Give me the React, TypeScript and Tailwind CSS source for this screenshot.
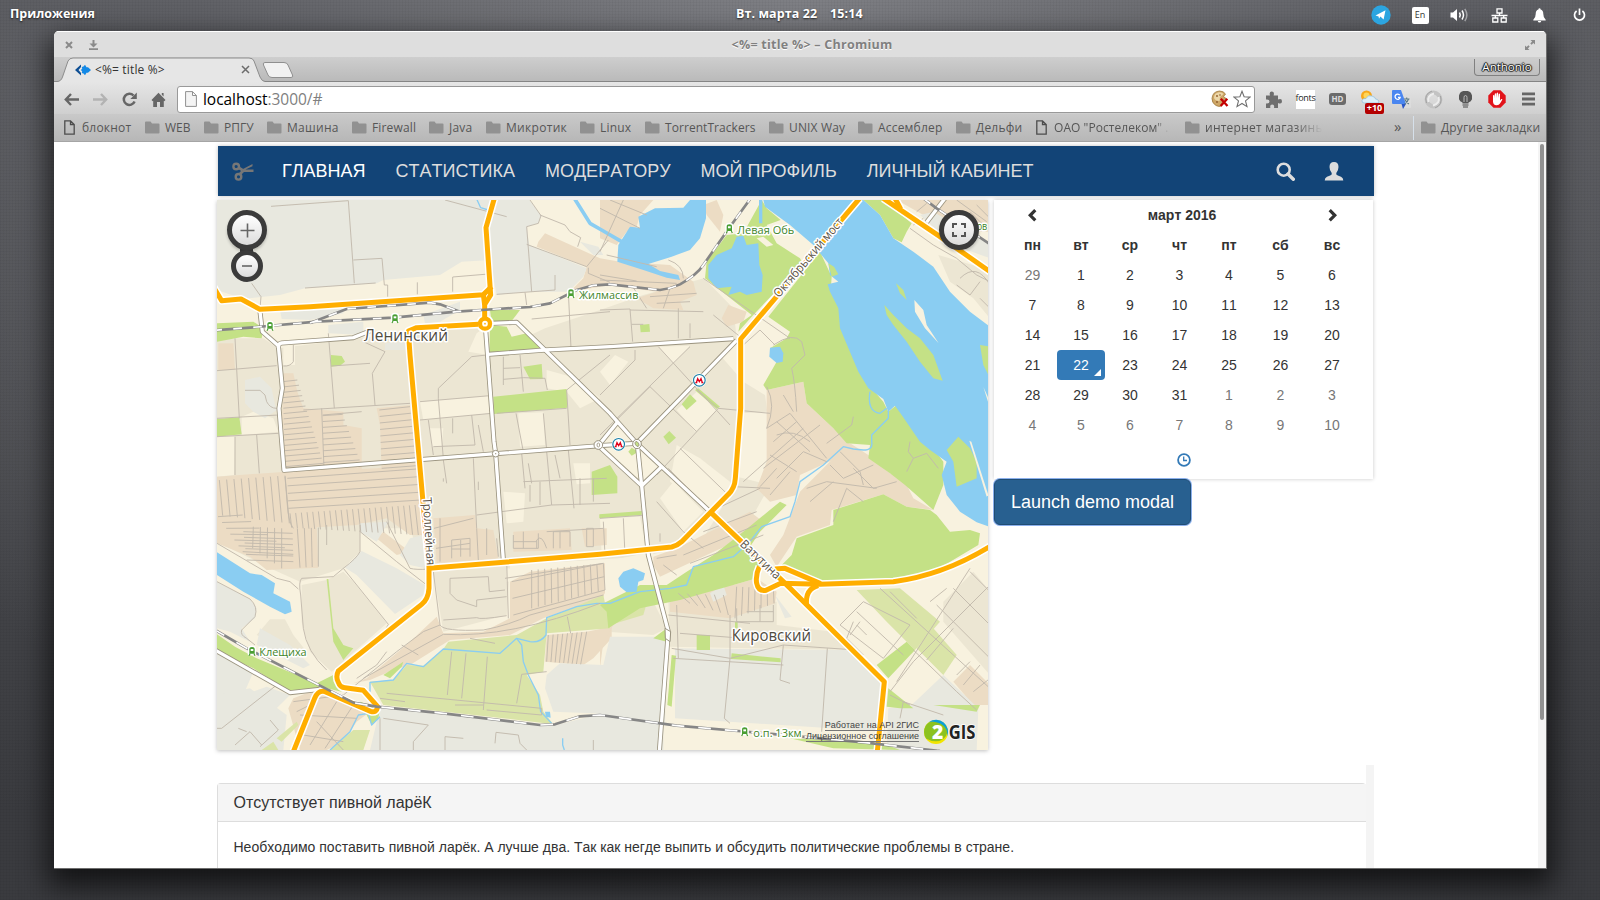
import React from "react";

type Pt = [number, number];

/* Parallel streets interpolated between edge a→b and edge c→d. */
function hatch(a: Pt, b: Pt, c: Pt, d: Pt, n: number): string {
  let s = "";
  for (let i = 0; i < n; i++) {
    const t = n === 1 ? 0 : i / (n - 1);
    const x1 = a[0] + (b[0] - a[0]) * t;
    const y1 = a[1] + (b[1] - a[1]) * t;
    const x2 = c[0] + (d[0] - c[0]) * t;
    const y2 = c[1] + (d[1] - c[1]) * t;
    s += `M${x1.toFixed(1)} ${y1.toFixed(1)}L${x2.toFixed(1)} ${y2.toFixed(1)}`;
  }
  return s;
}

const C = {
  cream: "#f8f2df",
  beige: "#ece6d3",
  brown: "#ecdcc4",
  grey: "#e8e8df",
  green: "#c4e186",
  lime: "#dae4a8",
  water: "#8acdf2",
  street: "#c2b9ac",
};

function Areas({ fill, list }: { fill: string; list: string[] }) {
  return (
    <g fill={fill}>
      {list.map((p, i) => (
        <polygon key={i} points={p} strokeLinejoin="round" />
      ))}
    </g>
  );
}

const orange = [
  "M10 275L35 317L93 312L150 343L300 335L820 299L845 275",
  "M853 10L828 98L842 300L824 328V366",
  "M820 299L824 330",
  "M805 388L620 398L595 408L600 480L638 910L657 1115V1180Q655 1212 635 1228L385 1428Q376 1445 385 1462Q390 1478 405 1478L460 1486L503 1535Q500 1555 482 1549L345 1490Q325 1484 314 1510L250 1670",
  "M657 1120L1170 1078L1385 1056Q1402 1052 1415 1040L1555 898Q1574 880 1576 850L1592 640V432L1949 10",
  "M1500 950L1720 1160L2023 1460L2002 1670",
  "M1648 1115Q1636 1140 1640 1165Q1645 1190 1668 1186L1712 1165L1830 1168L2050 1160Q2200 1140 2340 1054",
  "M1695 1122L1725 1120L1832 1166",
  "M1790 1232Q1784 1182 1825 1172",
  "M2020 10L2190 125L2340 230",
  "M2055 10L2072 42",
];

const white = [
  "M150 350L157 410L205 452L217 580L207 640L222 826L857 776L1170 752",
  "M205 458Q205 445 215 444L430 428L480 408",
  "M827 405L852 740L857 776L880 1095",
  "M845 385L920 382L1005 465L1200 655L1280 745L1500 950",
  "M835 478L1005 465L1200 455L1570 431",
  "M1580 436L1280 745L1165 752L1222 682",
  "M1165 752L1295 872L1355 815",
  "M1282 748L1295 872L1315 1080L1375 1310L1348 1670",
  "M10 1362L240 1493L330 1483",
  "M2205 10L2150 82",
];

const rails = [
  "M10 406L130 397L320 380L550 368L740 350L860 342L960 336L1020 325L1100 285L1150 271L1200 268L1350 285Q1380 282 1410 268Q1460 240 1480 210L1560 95L1622 10",
  "M300 384L410 342L660 323L690 328L750 350",
  "M10 1302L110 1360L430 1523L500 1535L700 1555L990 1590L1035 1588L1110 1564L1170 1560L1400 1592L1700 1618L1960 1642L2190 1668",
  "M2140 10L2180 40L2340 148",
];

const streets = [
  "M183 34L415 17L433 265M430 195L516 190L523 270L533 270V305M285 279L497 264M622 262V298M728 290V246L835 237M125 265L153 305L150 340",
  "M705 15L890 65M960 15L993 62L985 85L950 95L965 290M990 60L1065 90L1080 110L1112 128L1103 155M950 148L1130 215L1195 135M1135 218V235L1200 262M860 298L1035 285V240M945 292L950 330M965 372L1200 350M1075 290L1083 460",
  "M75 430L88 670M21 527L200 512M21 670L205 660M21 725L205 715M75 725V840M140 720L148 835M105 586H150L165 600L170 620Q180 640 200 640M250 450V500Q240 515 220 513",
  "M355 415L373 640M364 513L480 505M460 440L525 470L487 535L495 630M280 645L600 625M685 610V580L785 485L830 480M685 610L700 790M630 620L840 602M630 675L845 655M655 675L670 780M670 755L795 750L785 660M728 670V715M805 690L820 770M880 485V570M930 480L940 590M880 520L930 518M880 553L940 548L1005 550L1012 585M1200 480L1070 585L1080 750M860 655L1070 640M918 655L940 770M1000 655L1010 765",
  "M700 795L710 865M790 790L800 1000M935 775L945 880M1010 770L1025 930M1075 765L1092 940M955 805L965 865M1035 780L1050 850",
  hatch([218, 560], [225, 815], [262, 555], [340, 805], 17),
  hatch([338, 662], [340, 820], [398, 658], [455, 812], 10),
  hatch([508, 645], [515, 820], [600, 635], [622, 812], 10),
  hatch([232, 850], [235, 940], [620, 822], [632, 915], 5),
  hatch([28, 855], [225, 842], [38, 962], [238, 985], 10),
  hatch([240, 955], [615, 930], [245, 998], [625, 1020], 23),
  hatch([24, 965], [98, 1070], [98, 960], [250, 1078], 7),
  hatch([100, 1010], [110, 1095], [248, 1015], [250, 1100], 6),
  hatch([130, 995], [215, 1000], [128, 1060], [215, 1120], 5),
  hatch([262, 1000], [325, 998], [270, 1118], [325, 1115], 4),
  hatch([965, 1125], [1180, 1105], [965, 1240], [1185, 1185], 12),
  hatch([905, 1160], [910, 1260], [1180, 1105], [1185, 1185], 3),
  hatch([1015, 1320], [1130, 1310], [1010, 1400], [1112, 1408], 9),
  "M672 1000L790 970M678 1060L780 1045M690 1100V970M725 1090V1035L780 1030V1085M725 1062H780M752 1035V1085M800 1000L805 1095M830 1000V1080M860 1030L865 1085",
  hatch([1580, 1175], [1690, 1180], [1575, 1270], [1692, 1225], 7),
  hatch([1405, 1195], [1540, 1200], [1440, 1225], [1555, 1260], 6),
  "M335 640L342 820M338 660L455 650M225 845L232 930Q235 980 250 1000M450 990V1070Q440 1090 400 1120L370 1145L275 1150Q265 1160 272 1200L280 1300Q290 1370 350 1425M21 1045L200 1150L240 1160L265 1182M400 1120L535 1288L500 1350M448 1008L560 1100L650 1170M530 980L570 1060L600 1120Q620 1125 655 1122M350 990V1050",
  "M21 1160L120 1212Q145 1235 135 1265L95 1305Q90 1320 110 1330L135 1350M21 1600H35L200 1470M75 1650L120 1610L155 1650M110 1610L85 1600M180 1575L205 1605L150 1655M510 1570V1665M520 1570L655 1590L610 1640V1665M705 1665V1625L760 1630M855 1645L858 1612L925 1620L930 1645L950 1665M1150 1635V1665",
  "M530 1495L995 1540V1560L830 1545M725 1370L712 1500M768 1375L755 1510M832 1385L820 1545M935 1438L920 1525M935 1438L1010 1430M735 1530H820M510 1510L585 1520M720 1150L835 1145L838 1190L885 1185M720 1150V1195L740 1215L800 1235V1215L890 1205M700 1275L800 1268Q810 1275 890 1262M670 1130L690 1290Q700 1310 820 1305Q900 1290 960 1260L1180 1200M460 1450L700 1318Q900 1330 1170 1225M400 1500L560 1370L640 1310L690 1290M440 1450L500 1410L530 1370M575 1350L625 1380M1010 1010L1180 1000M800 960L1025 930L1200 925M890 1095L895 1270M885 1150L1180 1105M780 1330L855 1345M1072 1265L1082 1315",
  "M910 1020V1060H985V1015M940 1010V1060M910 1040H980M980 1060V1035Q995 1015 1010 1060M1030 1060V1010H1080V1055M1050 1010V1060M1130 1000H1150V1055H1130V1000M700 850V860M805 860V885M940 860L1190 850M960 870V920M990 860V930M1110 850V930M1150 850V920",
  "M250 1520L400 1500M270 1560L440 1570M280 1620L400 1640M330 1490L270 1640M380 1520L300 1650M430 1530L345 1660M300 1530L260 1550M320 1580L400 1665",
  "M1170 40L1290 100M1240 15L1170 170M1200 15L1310 60M1170 345L1260 342L1268 440M1265 270L1310 340M1265 388H1300M1405 340V430M1440 385V430M1260 345L1480 350M1320 305L1460 295M1340 325L1440 320M1380 280L1360 340",
  "M1345 455L1560 690M1440 455L1170 720M1275 465V495L1170 600M1220 675L1320 575M1320 575L1460 710M1525 640L1340 840M1410 760L1560 905M1525 640L1680 655M1460 585L1525 640M1375 820L1530 980M1480 250L1740 430M1510 360L1590 425M1600 450L1650 405L1695 450M1690 450Q1750 410 1775 440L1785 480L1745 520Q1755 560 1760 650M1375 195Q1420 210 1420 250",
  "M1670 575Q1700 630 1670 700L1740 655L1850 790M1700 680L1800 770M1690 740L1760 680M1660 820L1830 690M1680 780L1760 830M1700 850L1780 770L1850 800M1720 600L1750 650M1930 665L1925 690L1850 745M1700 720Q1750 700 1800 740M1680 900L1740 830M1860 810L1900 850L1990 810M1890 770L1950 830L1960 870M1790 880L1850 860L2000 880M1800 920L1870 860M1870 980L1910 880L1960 920M1930 820L1990 880L2060 860M2100 740L2095 770L2110 790L2090 830M2110 790L2150 775L2185 820",
  "M1500 950L1650 880M1570 875L1680 880M1480 1010L1640 950M1420 1080L1640 990M1440 1105L1660 1020M1350 1040V1015M1340 1090L1400 1080M1360 1110L1400 1140M1700 820L1650 875M1600 860L1780 700M1340 920L1420 1010L1480 1060M1170 970L1310 960M1180 980L1185 1080M1240 970L1245 1080",
  "M1375 1260L1620 1285M1400 1230L1405 1390M1385 1360L1560 1390L1720 1350L1940 1365M1560 1260V1390L1543 1570L1560 1585M1720 1350L1710 1455L1740 1465M1852 1360L1835 1610M1390 1390L1720 1410M1410 1315L1600 1330M1580 1240V1280H1690V1230M1650 1230V1280M1610 1250H1690",
  "M1960 1220L1890 1290L2020 1390L2100 1290L1960 1220M1930 1280L1910 1330L1960 1380M1940 1290L1970 1320M1950 1280L1920 1320M2010 1180L2340 1480M2080 1380L1940 1250M2280 1120L2060 1460M2340 1170L2110 1400L2040 1490M2110 1365L2240 1490L2300 1545M2280 1130L2340 1190M2230 1180L2340 1290M2180 1230L2340 1390M2230 1300L2150 1395M2040 1190L2120 1270M2160 1220L2210 1180M2240 1440L2280 1400M2260 1470L2310 1410M2290 1490L2340 1450M2070 1570L2080 1520L2200 1560M2040 1500L2100 1530",
  "M2100 100L2170 150L2240 190L2300 240L2340 260M2110 90L2140 70M2250 250Q2300 200 2340 270M2240 270L2280 300L2310 260M2280 50L2340 110M2300 30L2340 70M2240 15L2330 80M2310 310L2340 340M2120 50L2150 25M1190 180L1340 215M1170 240L1280 258M1170 255L1400 265",
];

function Station({ x, y }: { x: number; y: number }) {
  return (
    <g transform={`translate(${x} ${y})`}>
      <path d="M-9 9V-5Q-9 -13 0 -13T9 -5V9Z" fill="#fff" stroke="#fff" strokeWidth={7} />
      <path d="M-8 8V-5Q-8 -12 0 -12T8 -5V8Z" fill="#4a9e33" />
      <path d="M-4 -6H4V0H-4Z" fill="#fff" />
      <path d="M-6 8L-9 14M6 8L9 14" stroke="#4a9e33" strokeWidth={3.5} />
    </g>
  );
}

function Metro({ x, y }: { x: number; y: number }) {
  return (
    <g transform={`translate(${x} ${y})`}>
      <circle r={21} fill="#fff" />
      <circle r={17.5} fill="#fff" stroke="#1b7fa6" strokeWidth={3.5} />
      <path d="M-12 7H-6M12 7H6M-9 7L-5 -5L0 4L5 -5L9 7" fill="none" stroke="#e2001a" strokeWidth={4} />
    </g>
  );
}

function Label(p: { x: number; y: number; w: number; size: number; color: string; rot?: number; children: string }) {
  return (
    <text
      transform={`translate(${p.x} ${p.y}) rotate(${p.rot ?? 0})`}
      fontFamily="'Open Sans','Noto Sans',sans-serif"
      fontSize={p.size}
      fill={p.color}
      stroke="#ffffff"
      strokeWidth={9}
      strokeLinejoin="round"
      paintOrder="stroke"
      textLength={p.w}
      lengthAdjust="spacingAndGlyphs"
    >
      {p.children}
    </text>
  );
}

function CityMap() {
  return (
    <svg className="block h-[550px] w-[771px]" viewBox="21 15 2313 1650" preserveAspectRatio="none">
      <rect x="0" y="0" width="2400" height="1700" fill={C.cream} />
      <Areas
        fill={C.beige}
        list={[
          "21 430 160 430 205 460 450 430 620 405 820 400 800 415 775 470 835 480 1005 400 1170 345 1300 300 1482 250 1570 340 1580 430 1530 480 1600 560 1665 600 1672 650 1595 655 1560 900 1500 960 1400 1060 1300 1085 900 1110 890 1260 700 1310 670 1130 640 1120 600 1000 450 1000 450 1070 400 1120 270 1160 180 1120 21 1040",
          "275 1170 350 1155 400 1130 430 1160 530 1285 365 1430 300 1370 275 1280",
          "1375 1215 1700 1220 1700 1290 1870 1310 1930 1365 1380 1355",
          "2200 1220 2290 1130 2340 1190 2340 1440 2200 1280",
          "180 1273 225 1273 250 1320 290 1370 200 1350 140 1320",
          "1210 1260 1330 1220 1370 1300 1330 1320 1190 1310",
          "2185 180 2340 225 2340 370 2290 310 2220 260",
          "1500 870 1560 840 1680 870 1630 960 1560 1010 1480 1030 1540 930",
        ]}
      />
      <Areas
        fill={C.cream}
        list={[
          "630 620 835 602 840 655 640 675",
          "925 655 1000 652 1005 750 930 755",
          "21 725 75 725 72 840 21 845",
          "95 665 130 650 190 670 205 710 95 720",
          "220 445 255 445 255 510 220 510",
          "1010 525 1100 550 1170 610 1110 640 1070 590 1010 580",
          "1400 750 1470 790 1560 860 1560 880 1500 940 1380 860",
          "1400 645 1460 590 1525 640 1455 710",
          "1170 530 1215 480 1255 500 1200 570",
          "1345 455 1440 452 1390 505",
          "1222 682 1290 760 1355 815 1295 872 1165 760",
          "1350 910 1390 860 1480 950 1420 1010",
          "470 845 515 845 515 882 470 882",
          "880 890 945 895 940 980 890 985",
          "890 1120 960 1125 960 1155 890 1160",
          "1170 970 1290 965 1310 1070 1175 1080",
          "700 700 660 700 665 755 695 755",
          "1090 805 1140 805 1140 865 1100 868",
          "1180 1100 1330 1070 1330 1170 1190 1190",
        ]}
      />
      <Areas
        fill={C.brown}
        list={[
          "1005 115 1170 190 1230 200 1380 210 1450 260 1460 300 1410 320 1420 345 1330 340 1280 310 1340 290 1200 270 1080 290 1120 250 1130 215 980 155 985 140",
          "220 535 250 535 262 590 280 640 400 650 400 690 455 700 455 830 228 830 215 700",
          "500 640 600 630 625 830 515 830 510 690",
          "21 845 230 830 500 820 620 805 640 1020 600 1020 530 970 440 990 320 997 325 1118 170 1125 120 1085 21 1045",
          "25 445 70 445 75 525 25 525",
          "500 1030 520 1010 600 1070 560 1080",
          "670 970 795 960 800 1000 850 1005 865 1090 680 1105",
          "910 1010 1080 1000 1085 1065 910 1070",
          "1115 1000 1190 1000 1190 1050 1125 1055",
          "900 1160 960 1130 1185 1105 1185 1195 1000 1245 900 1280",
          "470 1450 600 1340 680 1265 700 1315 820 1310 960 1240 1185 1190 1180 1205 1000 1270 900 1320 720 1335 600 1410 550 1425 480 1455 430 1465",
          "1010 1320 1130 1310 1205 1295 1205 1330 1150 1390 1120 1410 1005 1400",
          "250 1510 330 1480 480 1550 440 1580 400 1640 350 1665 270 1665 235 1540",
          "1170 15 1330 15 1290 60 1280 95 1250 110 1220 150 1170 130",
          "1480 30 1520 15 1540 60 1530 110 1490 60",
          "1535 370 1555 330 1610 350 1600 380 1550 395",
          "1670 585 1780 560 1790 625 1870 700 1920 748 1880 790 1770 840 1760 900 1680 920 1640 880 1670 800",
          "1920 745 1975 780 2040 835 2080 850 2110 910 2170 945 2090 935 2020 898 1865 945 1860 990 1760 1025 1700 1115 1680 1080 1720 1020 1770 890 1870 790",
          "1330 1085 1400 1060 1620 950 1660 980 1640 1010 1350 1145 1330 1110",
          "1380 1215 1420 1170 1570 1170 1640 1150 1700 1190 1695 1225 1560 1270 1380 1250",
          "2060 15 2340 15 2340 110 2230 110",
          "2230 1460 2280 1410 2340 1470 2340 1530 2290 1530",
          "1170 1300 1210 1290 1180 1340 1170 1420",
        ]}
      />
      <Areas
        fill={C.grey}
        list={[
          "21 15 958 15 993 62 985 85 950 95 958 150 1130 220 1120 245 1075 290 945 290 860 300 840 195 755 200 690 240 520 255 500 265 285 280 210 300 100 312 21 285",
          "105 555 150 545 185 580 195 630 200 645 165 670 130 650 105 625",
          "355 390 460 380 460 420 355 415",
          "640 360 750 320 750 345 690 380 645 385",
          "210 345 400 330 400 355 300 375 215 372",
          "525 445 600 440 600 465 525 465",
          "455 1068 560 1120 645 1170 640 1200 555 1257 440 1140 405 1118",
          "450 985 535 980 500 1040 450 1010",
          "600 1030 640 1020 645 1120 600 1110 570 1080",
          "21 1160 120 1212 140 1240 135 1270 95 1300 120 1340 60 1310 21 1300",
          "150 1300 240 1350 300 1410 280 1420 140 1350",
          "21 1370 130 1430 100 1500 170 1475 240 1500 200 1540 150 1600 21 1665",
          "21 1500 120 1480 230 1560 220 1665 21 1665",
          "510 1540 1030 1592 1150 1562 1360 1580 1360 1665 480 1665",
          "1010 1440 1050 1405 1180 1410 1200 1325 1370 1325 1365 1590 1150 1555 1030 1550 1005 1480",
          "1395 1360 1930 1365 2020 1450 2025 1610 1395 1570",
          "2105 1530 2200 1440 2305 1540 2300 1665 2030 1665 2035 1540",
          "1500 1195 1540 1170 1550 1200 1510 1220",
          "1695 1200 1745 1265 1725 1270",
          "2130 60 2170 50 2340 150 2340 190 2230 150",
          "1110 140 1165 155 1180 180 1150 180",
        ]}
      />
      <Areas
        fill={C.lime}
        list={[
          "480 1460 550 1455 590 1410 640 1412 700 1362 715 1340 920 1320 1010 1270 1180 1200 1200 1300 1010 1315 1000 1430 950 1440 990 1500 1000 1550 1030 1588 840 1565 520 1530",
          "430 1605 480 1605 460 1665 360 1665",
          "1940 1185 2070 1180 2190 1280 2115 1365 2030 1280",
          "2120 1360 2170 1300 2240 1380 2200 1440",
          "200 1630 260 1580 265 1590 215 1640",
          "155 1665 190 1640 205 1665",
          "1170 1240 1320 1190 1300 1260 1200 1290",
        ]}
      />
      <Areas
        fill={C.green}
        list={[
          "21 385 130 380 160 400 155 430 100 425 21 440",
          "363 480 395 483 405 500 390 512 363 515",
          "850 605 1070 582 1072 638 852 657",
          "940 515 995 507 998 552 960 553",
          "840 345 930 345 900 385 845 385",
          "840 390 890 395 905 425 950 415 995 460 838 472",
          "21 672 88 667 95 718 21 725",
          "1145 830 1200 810 1222 845 1222 895 1145 900",
          "1168 958 1295 948 1295 960 1168 970",
          "350 1152 355 1152 370 1300 400 1350 415 1355 430 1360 400 1395 370 1340",
          "21 1318 75 1355 140 1390 320 1465 370 1440 395 1490 330 1475 245 1493 130 1420 21 1372",
          "450 1520 510 1540 505 1570 485 1590 470 1560",
          "1290 390 1318 387 1320 410 1292 412",
          "1415 628 1440 598 1460 618 1430 645",
          "1360 725 1378 708 1398 728 1376 748",
          "1455 585 1465 580 1530 635 1520 642",
          "1255 770 1265 758 1285 770 1265 782",
          "1655 15 1670 40 1712 75 1670 90 1700 145 1770 190 1778 205 1625 365 1585 410 1590 385 1625 360 1485 250 1490 200 1550 120 1600 115",
          "1830 170 1865 245 1862 290 1895 340 1900 400 1930 450 1955 530 1985 580 2020 620 2035 650 2060 630 2080 660 2170 760 2200 800 2200 870 2170 945 2085 870 2040 835 1975 790 1980 750 1910 745 1870 700 1790 625 1780 560 1670 585 1660 570 1700 500 1680 460 1730 430 1740 410 1675 365",
          "1960 15 2020 15 2105 85 2090 110 2075 142 2050 130 2010 60",
          "1870 990 1760 1030 1745 1080 1710 1115 1730 1120 1830 1158 2050 1158 2170 1130 2305 1050 2310 1015 2280 1005 2220 1010 2180 960 2160 945 2090 935 2020 898 1870 945",
          "1170 1230 1290 1170 1370 1170 1430 1130 1510 1080 1600 1010 1710 920 1730 930 1650 1010 1610 1070 1650 1100 1640 1150 1570 1170 1410 1215 1290 1240 1195 1300 1190 1250",
          "1460 1320 1500 1320 1500 1365 1460 1365",
          "1565 1375 1712 1390 1712 1402 1563 1392",
          "1385 1380 1398 1382 1385 1535 1372 1530",
          "2000 1410 2090 1340 2115 1365 2035 1450",
          "2035 1480 2110 1540 2070 1540 2030 1535",
          "1740 1630 2010 1642 2070 1665 1870 1660",
          "1575 1280 1583 1280 1583 1300 1575 1300",
          "1330 1330 1370 1300 1370 1340",
          "520 1440 580 1400 575 1415 540 1450",
          "2170 1530 2310 1530 2300 1550",
        ]}
      />
      <Areas
        fill={C.water}
        list={[
          "1335 40 1420 38 1440 15 1488 15 1488 70 1470 130 1440 165 1385 185 1315 207 1350 228 1405 240 1410 255 1370 248 1300 225 1222 200 1225 150 1260 95 1290 98 1285 65",
          "1680 458 1710 455 1720 475 1718 500 1700 504 1678 485",
          "1495 210 1520 180 1565 160 1580 125 1600 122 1610 150 1645 145 1648 210 1658 240 1655 290 1610 300 1590 290 1555 300 1565 275 1520 280 1495 250",
          "1660 15 1960 15 2010 60 2050 130 2110 170 2170 215 2220 290 2280 350 2340 395 2340 996 2300 982 2250 950 2210 900 2195 840 2210 800 2160 765 2130 740 2075 660 2055 632 2035 650 2020 612 1975 580 1945 530 1890 400 1885 340 1860 290 1853 268 1885 260 1860 240 1855 205 1810 150 1740 90 1665 35",
          "21 1072 120 1135 155 1140 195 1165 190 1195 240 1220 245 1250 225 1258 180 1235 100 1190 21 1140",
          "1225 1150 1240 1130 1270 1120 1305 1135 1300 1155 1285 1160 1280 1190 1250 1192 1230 1175",
          "1005 1550 1020 1550 1022 1568 1008 1565",
        ]}
      />
      <g fill="none" stroke={C.water} strokeLinejoin="round">
        <path strokeWidth={11} d="M1093 10L1140 85L1180 108L1235 140" />
        <path strokeWidth={10} d="M1652 15V85" />
        <path strokeWidth={4} d="M1980 590Q1970 650 2010 655L2030 640M2035 640V670L1985 720V740Q1990 765 1960 765L1930 762L1900 755L1840 810L1770 860L1755 920L1740 965L1655 995L1620 1040L1570 1085L1450 1115L1430 1170L1380 1180L1290 1190L1200 1225L1160 1225L1100 1235L1010 1268L1008 1320Q990 1345 960 1340L920 1330L870 1375L700 1362L640 1415L590 1405L550 1455L480 1462L480 1490" />
        <path strokeWidth={4} d="M920 1330L935 1350L940 1400L955 1440L985 1500L992 1550L1025 1585M360 1665L420 1610L445 1560L475 1555L485 1590L510 1565M1058 1630V1650L1063 1665" />
        <path strokeWidth={4} d="M800 12L812 38L835 45" />
      </g>
      <Areas
        fill={C.green}
        list={[
          "2023 330 2050 360 2090 400 2130 430 2170 480 2198 557 2170 550 2130 500 2090 440 2050 390 2030 360",
          "2058 265 2080 285 2090 315 2070 295",
          "2310 450 2340 455 2340 550 2320 510",
          "2210 765 2245 725 2280 760 2300 800 2300 850 2240 875 2230 800",
          "1855 205 1872 215 1885 238 1865 245",
        ]}
      />
      <Areas
        fill={C.cream}
        list={["2113 315 2140 345 2150 390 2186 445 2145 400 2115 350", "2278 737 2284 740 2335 900 2330 905", "2320 575 2340 620 2340 640", "1640 130 1660 125 1690 150 1670 155"]}
      />
      <g fill="none" stroke={C.street} strokeWidth={2.8} strokeLinejoin="round">
        {streets.map((d, i) => (
          <path key={i} d={d} />
        ))}
      </g>
      <g fill="none" strokeLinejoin="round">
        {white.map((d, i) => (
          <path key={i} d={d} stroke="#9a937f" strokeWidth={15} />
        ))}
        {white.map((d, i) => (
          <path key={i} d={d} stroke="#ffffff" strokeWidth={10} />
        ))}
        <path d="M1365 1300L1382 1310L1380 1340L1366 1330Z" fill="#fff" stroke="#9a937f" strokeWidth={3} />
        <circle cx={857} cy={776} r={10} fill="#fff" stroke="#9a937f" strokeWidth={3} />
        <circle cx={857} cy={776} r={2} fill="#9a937f" />
        <circle cx={1165} cy={750} r={13} fill="#fff" stroke="#9a937f" strokeWidth={3} />
        <ellipse cx={1281} cy={747} rx={13} ry={14} fill="#fff" stroke="#9a937f" strokeWidth={3} />
        <ellipse cx={1281} cy={747} rx={5} ry={8} fill={C.green} stroke="#9a937f" strokeWidth={2.5} transform="rotate(-30 1281 747)" />
        <ellipse cx={1165} cy={750} rx={4} ry={6} stroke="#9a937f" strokeWidth={2.5} />
      </g>
      <g fill="none" strokeLinejoin="round">
        {orange.map((d, i) => (
          <path key={i} d={d} stroke="#ffffff" strokeWidth={24} />
        ))}
        <circle cx={825} cy={386} r={15} stroke="#fff" strokeWidth={24} />
        {orange.map((d, i) => (
          <path key={i} d={d} stroke="#ffae00" strokeWidth={15} />
        ))}
        <circle cx={825} cy={386} r={15} stroke="#ffae00" strokeWidth={13} fill="#fff" />
        <circle cx={825} cy={386} r={2.5} fill="#ffae00" />
      </g>
      <g fill="none" strokeLinejoin="round">
        {rails.map((d, i) => (
          <path key={i} d={d} stroke="#868686" strokeWidth={8} />
        ))}
        {rails.map((d, i) => (
          <path key={i} d={d} stroke="#ffffff" strokeWidth={5} strokeDasharray={i === 2 ? "38 42" : "26 34"} />
        ))}
      </g>
      <Station x={180} y={393} />
      <Station x={555} y={370} />
      <Station x={1083} y={295} />
      <Station x={1558} y={100} />
      <Station x={126} y={1368} />
      <Station x={1604} y={1609} />
      <Metro x={1468} y={556} />
      <Metro x={1226} y={748} />
      <Label x={462} y={438} w={252} size={47} color="#4f4b3f">Ленинский</Label>
      <Label x={1565} y={1338} w={238} size={47} color="#4f4b3f">Кировский</Label>
      <Label x={1107} y={311} w={178} size={34} color="#3f8529">Жилмассив</Label>
      <Label x={1582} y={117} w={171} size={34} color="#3f8529">Левая Обь</Label>
      <Label x={148} y={1382} w={142} size={34} color="#3f8529">Клещиха</Label>
      <Label x={1630} y={1625} w={145} size={34} color="#3f8529">о.п. 13км</Label>
      <Label x={2300} y={105} w={32} size={34} color="#3f8529">ов</Label>
      <Label x={1707} y={310} w={300} size={37} color="#5d5548" rot={-49.5}>Октябрьский мост</Label>
      <Label x={638} y={908} w={204} size={37} color="#5d5548" rot={86.5}>Троллейная</Label>
      <Label x={1588} y={1050} w={152} size={37} color="#5d5548" rot={43.5}>Ватутина</Label>
    </svg>
  );
}

function GisMark() {
  return (
    <svg className="h-[28px] w-[54px] overflow-visible" viewBox="0 0 162 84">
      <circle cx="39" cy="42" r="36" fill="#f2e500" />
      <path d="M3 42A36 36 0 0 1 18 13Q50 4 68 24Q80 46 62 62Q40 78 10 62Q3 54 3 42Z" fill="#8cc21f" />
      <path d="M18 12A36 36 0 0 1 72 56Q76 34 60 22Q42 8 18 12Z" fill="#0a9fd8" />
      <text x="27" y="63" fontFamily="'Open Sans',sans-serif" fontWeight="800" fontSize="60" fill="#fff" textLength="34" lengthAdjust="spacingAndGlyphs">2</text>
      <text x="77" y="64" fontFamily="'Open Sans',sans-serif" fontWeight="700" fontSize="58" fill="#222" stroke="#fff" strokeWidth="5" paintOrder="stroke" textLength="80" lengthAdjust="spacingAndGlyphs">GIS</text>
    </svg>
  );
}

const Folder = () => (
  <svg className="h-[13px] w-[15px] shrink-0" viewBox="0 0 15 13">
    <path d="M0 1.5Q0 .5 1 .5H5.5L7 2.5H13.5Q14.5 2.5 14.5 3.5V11.5Q14.5 12.5 13.5 12.5H1Q0 12.5 0 11.5Z" fill="#919191" />
  </svg>
);
const Doc = () => (
  <svg className="h-[15px] w-[13px] shrink-0" viewBox="0 0 13 15">
    <path d="M.8 .8H6.5L10.2 4.5V14.2H.8ZM6.5 .8V4.5H10.2" fill="none" stroke="#4c4c4c" strokeWidth="1.3" />
  </svg>
);

function Bookmark({ w, doc, text, cls }: { w: string; doc?: boolean; text: string; cls?: string }) {
  return (
    <div className={`flex shrink-0 items-center gap-[5px] overflow-hidden whitespace-nowrap ${w}`}>
      {doc ? <Doc /> : <Folder />}
      <span className={cls ?? ""}>{text}</span>
    </div>
  );
}

const Slot = ({ w, children }: { w: string; children?: React.ReactNode }) => (
  <div className={`flex shrink-0 items-center justify-center ${w}`}>{children}</div>
);

const weeks: string[][] = [
  ["29", "1", "2", "3", "4", "5", "6"],
  ["7", "8", "9", "10", "11", "12", "13"],
  ["14", "15", "16", "17", "18", "19", "20"],
  ["21", "22", "23", "24", "25", "26", "27"],
  ["28", "29", "30", "31", "1", "2", "3"],
  ["4", "5", "6", "7", "8", "9", "10"],
];

function Calendar() {
  return (
    <div className="h-[279px] w-[379px] bg-white px-[14px] text-[14px] leading-[30px] text-[#333] shadow-[0_0_4px_rgba(0,0,0,0.22)]">
      <div className="grid grid-cols-[49px_48px_50px_49px_50px_53px_50px] text-center font-bold">
        <div className="flex items-center justify-center">
          <svg className="h-[13px] w-[9px]" viewBox="0 0 9 13"><path d="M7.3 1.2L2.2 6.3L7.3 11.4" fill="none" stroke="#333" strokeWidth="3.2" /></svg>
        </div>
        <div className="col-span-5">март 2016</div>
        <div className="flex items-center justify-center">
          <svg className="h-[13px] w-[9px]" viewBox="0 0 9 13"><path d="M1.7 1.2L6.8 6.3L1.7 11.4" fill="none" stroke="#333" strokeWidth="3.2" /></svg>
        </div>
        {["пн", "вт", "ср", "чт", "пт", "сб", "вс"].map((d) => (
          <div key={d}>{d}</div>
        ))}
      </div>
      <div className="grid grid-cols-[49px_48px_50px_49px_50px_53px_50px] text-center">
        {weeks.flatMap((row, r) =>
          row.map((d, c) => {
            const muted = (r === 0 && c === 0) || (r === 4 && c > 3) || r === 5;
            const today = r === 3 && c === 1;
            return (
              <div key={`${r}-${c}`} className={today ? "relative rounded-[4px] bg-[#337ab7] text-white" : muted ? "text-[#777]" : ""}>
                {d}
                {today && <i className="absolute right-[4px] bottom-[4px] border-b-[7px] border-l-[7px] border-b-white border-l-transparent" />}
              </div>
            );
          }),
        )}
      </div>
      <div className="flex justify-center pt-[13px] pl-px">
        <svg className="h-[14px] w-[14px]" viewBox="0 0 14 14" fill="none" stroke="#337ab7">
          <circle cx="7" cy="7" r="5.900" strokeWidth="1.800" />
          <path d="M6.700 3.400V7.500H10" strokeWidth="1.300" />
        </svg>
      </div>
    </div>
  );
}

function TopPanel() {
  return (
    <div className="flex h-[31px] items-center pb-[3px] text-[12.5px] font-bold text-white [text-shadow:0_1px_2px_rgba(0,0,0,0.7)]">
      <div className="w-[726px] pl-[10px]">Приложения</div>
      <div className="flex w-[635px] gap-[13px] pl-[10px] tracking-[0.08px]">
        <span>Вт. марта 22</span>
        <span>15:14</span>
      </div>
      <div className="flex items-center pt-[2px]">
        <Slot w="w-[40px]">
          <svg className="h-5 w-5" viewBox="0 0 20 20"><circle cx="10" cy="10" r="9.7" fill="#2ca5e0" /><path d="M4.5 10.6L14.5 5.3L12.6 14.6L9.4 11.6L8 13.8L7.6 11.4Z" fill="#fff" /></svg>
        </Slot>
        <Slot w="w-[38px]">
          <span className="flex h-[17px] w-[17px] items-center justify-center rounded-[2px] bg-white text-[9px] font-normal text-[#333] [text-shadow:none]">En</span>
        </Slot>
        <Slot w="w-[40px]">
          <svg className="h-4 w-[19px]" viewBox="0 0 19 16" fill="none" stroke="#fff" strokeWidth="1.5"><path d="M.5 5.5H3L7 2V14L3 10.500H.5Z" fill="#fff" stroke="none" /><path d="M9.500 5.500Q11 8 9.500 10.500M12 3.500Q15 8 12 12.500" /><path d="M14.800 1.800Q19 8 14.800 14.200" opacity=".45" /></svg>
        </Slot>
        <Slot w="w-[40px]">
          <svg className="h-[15px] w-[17px]" viewBox="0 0 17 15" fill="none" stroke="#fff" strokeWidth="1.3"><path d="M6 .9H11V5H6ZM1.800 10H6.800V14H1.800ZM10.200 10H15.200V14H10.200ZM8.500 5V7.500M.5 7.500H16.500M4.300 7.500V10M12.700 7.500V10" /></svg>
        </Slot>
        <Slot w="w-[40px]">
          <svg className="h-[15px] w-[13px]" viewBox="0 0 13 15" fill="#fff"><path d="M6.500 .3Q7.600 .3 7.600 1.600Q10.300 2.400 10.300 6Q10.300 10 12.700 11.800V12.400H.3V11.800Q2.700 10 2.700 6Q2.700 2.400 5.400 1.600Q5.400 .3 6.500 .3ZM4.800 13H8.200Q8 14.600 6.500 14.600T4.800 13Z" /></svg>
        </Slot>
        <Slot w="w-[40px]">
          <svg className="h-[14px] w-[13px]" viewBox="0 0 13 14" fill="none" stroke="#fff" strokeWidth="1.7"><path d="M6.500 .5V7M3.600 3A5 5 0 1 0 9.400 3" /></svg>
        </Slot>
      </div>
    </div>
  );
}

function TitleBar() {
  return (
    <div className="flex h-[26px] items-center border-t border-white bg-[#dedede] text-[12.5px] font-bold text-[#808080]">
      <div className="flex w-[668px] items-center gap-[16px] pl-[11px]">
        <svg className="h-[8px] w-[8px]" viewBox="0 0 8 8"><path d="M1 1L7 7M7 1L1 7" stroke="#8a8a8a" strokeWidth="2" /></svg>
        <svg className="h-[10px] w-[9px]" viewBox="0 0 9 10"><path d="M3.500 0H5.500V3.500H8.500L4.500 7.500L.5 3.500H3.500ZM0 8.200H9V10H0Z" fill="#8a8a8a" /></svg>
      </div>
      <div className="w-[180px] pt-px text-center tracking-[0.25px] whitespace-nowrap [text-shadow:0_1px_0_#fff]">&lt;%= title %&gt; – Chromium</div>
      <div className="flex flex-1 justify-end pr-[11px]">
        <svg className="h-[10px] w-[10px]" viewBox="0 0 10 10" fill="#8a8a8a"><path d="M5.500 0H10V4.500L8.400 2.900L6.600 4.700L5.300 3.400L7.100 1.600ZM4.500 10H0V5.500L1.600 7.100L3.400 5.300L4.700 6.600L2.900 8.400Z" /></svg>
      </div>
    </div>
  );
}

function TabStrip() {
  return (
    <div className="flex h-[25px] justify-between bg-linear-to-b from-[#cecece] to-[#b9b9b9] shadow-[inset_0_-1px_0_#858585]">
      <div className="relative h-[25px] w-[245px]">
        <svg className="absolute inset-0 h-[25px] w-[245px]" viewBox="0 0 245 25">
          <path d="M0 25V24.5H3Q7 24.500 8.500 20L14 4Q15.500 1 19 1H195Q199 1 200 4L206 20Q208 24.500 211 24.500V26H0Z" fill="#e6e6e6" />
          <path d="M0 24.500H3Q7 24.500 8.500 20L14 4Q15.500 1 19 1H195Q199 1 200 4L206 20Q208 24.500 211 24.500" fill="none" stroke="#8c8c8c" />
          <path d="M211 5.500H230Q233 5.500 234 8L238.500 18Q239.500 20.500 237 20.500H218Q215 20.500 214 18L209.500 8Q208.500 5.500 211 5.500Z" fill="#f1f1f1" stroke="#8f8f8f" />
        </svg>
        <div className="relative flex h-[25px] items-center pl-[21px] text-[12px] text-[#333]">
          <svg className="h-[12px] w-[16px]" viewBox="0 0 16 12"><path d="M6 .5V3L3.500 6L6 9V11.500L0 6Z" fill="#0e4f94" /><path d="M10 .8L11.500 3.200H13L16 6L13 8.800H11.500L10 11.200L8.500 9.500L6.800 9L7.200 7.300L5.800 6L7.200 4.700L6.800 3L8.500 2.500Z" fill="#1389e6" /></svg>
          <span className="ml-[4px] w-[146px] tracking-[0.15px]">&lt;%= title %&gt;</span>
          <svg className="h-[9px] w-[9px]" viewBox="0 0 9 9"><path d="M1 1L8 8M8 1L1 8" stroke="#6c6c6c" strokeWidth="1.500" /></svg>
        </div>
      </div>
      <div className="mt-[2px] mr-[6px] flex h-[17px] w-[66px] items-center justify-center rounded-b-[4px] border border-t-0 border-[#808080] text-[11.500px] text-white [text-shadow:0_0_1px_#000,1px_0_1px_#222,-1px_0_1px_#222,0_1px_1px_#222,0_-1px_1px_#222]">
        Anthonio
      </div>
    </div>
  );
}

function Toolbar() {
  return (
    <div className="flex h-[32px] items-center bg-linear-to-b from-[#e6e6e6] to-[#cfcfcf] pt-[2px]">
      <div className="flex w-[123px] items-center pl-[3px]">
        <Slot w="w-[29px]"><svg className="h-[13px] w-[15px]" viewBox="0 0 15 13"><path d="M7 1L1.800 6.500L7 12M1.800 6.500H15" fill="none" stroke="#666" strokeWidth="2.400" /></svg></Slot>
        <Slot w="w-[29px]"><svg className="h-[13px] w-[15px]" viewBox="0 0 15 13"><path d="M8 1L13.200 6.500L8 12M13.200 6.500H0" fill="none" stroke="#b3b3b3" strokeWidth="2.400" /></svg></Slot>
        <Slot w="w-[29px]"><svg className="h-[15px] w-[15px]" viewBox="0 0 15 15"><path d="M12.600 9.500A5.600 5.600 0 1 1 11.500 3.500" fill="none" stroke="#666" strokeWidth="2.500" /><path d="M14.800 .5V7H8.300Z" fill="#666" /></svg></Slot>
        <Slot w="w-[29px]"><svg className="h-[15px] w-[15px]" viewBox="0 0 15 15"><path d="M7.500 .8L14.500 8L13.300 9.200L12.800 8.700V15H9V10H6V15H2.200V8.700L1.700 9.200L.5 8ZM10.800 1H12.600V4.500L10.800 2.700Z" fill="#666" /></svg></Slot>
      </div>
      <div className="flex h-[27px] w-[1078px] items-center rounded-[3px] border border-[#999] bg-white">
        <svg className="ml-[7px] h-[16px] w-[12px]" viewBox="0 0 12 16"><path d="M.6 .6H7.500L11.400 4.500V15.400H.6ZM7.500 .6V4.500H11.400" fill="#f4f4f4" stroke="#909090" /></svg>
        <span className="ml-[6px] flex-1 text-[15.500px] leading-6 tracking-[-0.05px] text-black">localhost<span className="text-[#808080]">:3000/#</span></span>
        <svg className="h-[18px] w-[18px]" viewBox="0 0 18 18"><path d="M8.500 1Q12.500 1 14.500 4L12.500 6.500L15 8.500L12 10L10.500 16Q8 17 5 15.500Q.8 13 1 8.500Q1.500 1.500 8.500 1Z" fill="#cfa868" stroke="#a07a3c" strokeWidth=".8" /><path d="M8 2.200Q11 2 12.500 4L9 7L8.500 11Q4 11 3 8Q3 3 8 2.200Z" fill="#ecd7a8" /><circle cx="6" cy="6" r=".9" fill="#8c5a2b" /><circle cx="9" cy="5" r=".8" fill="#8c5a2b" /><circle cx="6" cy="12" r=".9" fill="#8c5a2b" /><path d="M9.800 8.700L16.500 16M16.300 8.700L9.600 16" stroke="#c40000" strokeWidth="2.300" /></svg>
        <svg className="mr-[3px] ml-[4px] h-[18px] w-[18px]" viewBox="0 0 18 18"><path d="M9 1.300L11.100 6.700L17 7.100L12.500 10.900L14 16.600L9 13.500L4 16.600L5.500 10.900L1 7.100L6.900 6.700Z" fill="#fff" stroke="#707070" strokeWidth="1.100" /></svg>
      </div>
      <div className="flex items-center pl-[2px]">
        <Slot w="w-[32px]"><svg className="h-[17px] w-[17px]" viewBox="0 0 17 17"><path d="M1 4.500H5Q3.800 .5 6.800 .5T8.600 4.500H13V8.500Q17 7 17 10.300T13 12V17H9Q9.800 13.500 7.200 13.500T5.400 17H1V12.500Q4.500 13 4.500 10.500T1 8.500Z" fill="#6e6e6e" /></svg></Slot>
        <Slot w="w-[32px]"><span className="h-[19px] w-[19px] bg-white text-center text-[9px] leading-[15px] tracking-[-0.3px] text-[#222]">fonts</span></Slot>
        <Slot w="w-[33px]"><span className="flex h-[12px] w-[17px] items-center justify-center rounded-[3px] bg-[#6b6b6b] text-[8px] font-bold text-[#ddd]">HD</span></Slot>
        <Slot w="w-[32px]">
          <div className="relative h-[19px] w-[20px]">
            <svg className="h-[19px] w-[20px]" viewBox="0 0 20 19"><circle cx="6.500" cy="6" r="5.500" fill="#f7a81b" /><circle cx="6.500" cy="5.500" r="3" fill="#ffd65a" /><path d="M4.500 13Q1.500 13 2 10.500T6 8.500Q8 4.500 12 6T15.500 9Q19.500 9.500 18.500 13Z" fill="#dceef8" stroke="#8fbdd8" strokeWidth=".7" /></svg>
            <span className="absolute top-[13px] left-[5px] flex h-[11px] w-[19px] items-center justify-center rounded-[2px] bg-[#b40000] text-[9px] font-bold text-white">+10</span>
          </div>
        </Slot>
        <Slot w="w-[31px]"><svg className="h-[19px] w-[19px]" viewBox="0 0 19 19"><path d="M8 4H18Q19 4 19 5V17Q19 18 18 18H10Z" fill="#dcdcdc" /><path d="M1 0H9L14 14H1Q0 14 0 13V1Q0 0 1 0Z" fill="#4a86f0" /><path d="M9.500 14H14L11 19Z" fill="#2a56c6" /><path d="M7.800 5.200A2.600 2.600 0 1 0 8.200 7.300H6" fill="none" stroke="#fff" strokeWidth="1.300" /><path d="M12 9H17.500M14.700 7.500V9M16.500 9Q15.500 12.500 12.500 14M13.300 10Q14.500 13 17 14" fill="none" stroke="#5b7a86" strokeWidth="1.100" /></svg></Slot>
        <Slot w="w-[32px]"><svg className="h-[19px] w-[19px]" viewBox="0 0 19 19" fill="none"><circle cx="9.500" cy="9.500" r="6.800" stroke="#c3c3c3" strokeWidth="4.200" /><path d="M8 1Q-.5 4 2.500 13M11 18Q19 15 16.500 6" stroke="#a2a2a2" strokeWidth="1" /><path d="M4.500 12Q2.500 6 10 3.500M14.500 7Q16.500 13 9 15.500" stroke="#ededed" strokeWidth="2" /></svg></Slot>
        <Slot w="w-[32px]"><svg className="h-[17px] w-[13px]" viewBox="0 0 13 17"><path d="M6.500 0A6 6 0 0 1 9.500 11.500V12.500H3.500V11.500A6 6 0 0 1 6.500 0Z" fill="#565656" /><path d="M5 11V6.500Q5 4.500 6.500 4.500T8 6.500V11" fill="none" stroke="#bbb" /><path d="M3.500 14H9.500M4 16H9" stroke="#777" strokeWidth="1.400" /></svg></Slot>
        <Slot w="w-[32px]"><svg className="h-[18px] w-[18px]" viewBox="0 0 18 18"><path d="M5.500 .3H12.500L17.700 5.500V12.500L12.500 17.700H5.500L.3 12.500V5.500Z" fill="#e2131a" /><path d="M5 9V5.500Q5.700 4.500 6.400 5.500V8.500L6.800 3.700Q7.600 2.800 8.200 3.700V8L8.700 2.900Q9.400 2 10.100 2.900V8L10.700 4Q11.500 3.200 12 4V10.500L13.300 9Q14.500 8.600 14.300 9.700L12 13.500Q11 15.300 8.500 15.200Q5 15 5 11.500Z" fill="#fff" /></svg></Slot>
        <Slot w="w-[31px]"><svg className="h-[14px] w-[13px]" viewBox="0 0 13 14"><path d="M0 1.800H13M0 7H13M0 12.200H13" stroke="#666" strokeWidth="2.800" /></svg></Slot>
      </div>
    </div>
  );
}

function BookmarksBar() {
  return (
    <div className="flex h-[28px] items-center border-b border-[#a5a5a5] bg-linear-to-b from-[#c9c9c9] to-[#b7b7b7] pl-[10px] text-[12px] text-[#565656]">
      <Bookmark w="w-[81px]" doc text="блокнот" cls="tracking-[0.2px]" />
      <Bookmark w="w-[59px]" text="WEB" />
      <Bookmark w="w-[63px]" text="РПГУ" />
      <Bookmark w="w-[85px]" text="Машина" cls="tracking-[0.3px]" />
      <Bookmark w="w-[77px]" text="Firewall" cls="tracking-[0.15px]" />
      <Bookmark w="w-[57px]" text="Java" cls="tracking-[0.2px]" />
      <Bookmark w="w-[94px]" text="Микротик" cls="tracking-[0.3px]" />
      <Bookmark w="w-[65px]" text="Linux" cls="tracking-[0.2px]" />
      <Bookmark w="w-[124px]" text="TorrentTrackers" cls="tracking-[0.06px]" />
      <Bookmark w="w-[89px]" text="UNIX Way" cls="tracking-[0.15px]" />
      <Bookmark w="w-[98px]" text="Ассемблер" cls="tracking-[0.2px]" />
      <Bookmark w="w-[80px]" text="Дельфи" cls="tracking-[0.2px]" />
      <Bookmark w="w-[149px]" doc text={'ОАО "Ростелеком" .'} cls="tracking-[0.05px] [mask-image:linear-gradient(90deg,#000_88%,transparent)]" />
      <Bookmark w="w-[138px]" text="интернет магазины" cls="tracking-[0.25px] [mask-image:linear-gradient(90deg,#000_75%,transparent_98%)]" />
      <div className="ml-[71px] w-[20px] pb-[3px] text-[15px] leading-none">»</div>
      <div className="h-[24px] w-[8px] border-l border-[#d6e0ea]" />
      <Bookmark w="w-[125px]" text="Другие закладки" cls="tracking-[0.15px]" />
    </div>
  );
}

function NavBar() {
  return (
    <nav className="ml-px flex h-[50px] w-[1156px] items-center bg-[#124477] text-[18px] text-[#ddd] shadow-[0_0_4px_rgba(0,0,0,0.25)]">
      <div className="w-[64px] pl-[14px]">
        <svg className="h-[19px] w-[22px]" viewBox="0 0 22 19" fill="none" stroke="#777" strokeWidth="2.400">
          <circle cx="4.200" cy="4.500" r="2.800" />
          <circle cx="6.500" cy="14.800" r="2.800" />
          <path d="M7 5.800L11 8.500M7.500 12.500L11 9" strokeWidth="2.800" />
          <path d="M10.500 7.300L20.500 2V4.200L13.500 7.600H21.500V10H11Z" fill="#777" stroke="none" />
        </svg>
      </div>
      <div className="flex flex-1 gap-[30px]">
        <span className="text-white">ГЛАВНАЯ</span>
        <span>СТАТИСТИКА</span>
        <span>МОДЕРАТОРУ</span>
        <span>МОЙ ПРОФИЛЬ</span>
        <span>ЛИЧНЫЙ КАБИНЕТ</span>
      </div>
      <div className="flex gap-[29px] pr-[30px]">
        <svg className="h-[19px] w-[19px]" viewBox="0 0 19 19" fill="none" stroke="#ddd"><circle cx="7.700" cy="7.700" r="6" strokeWidth="2.600" /><path d="M12 12L17.300 17.300" strokeWidth="3.400" strokeLinecap="round" /></svg>
        <svg className="h-[19px] w-[20px]" viewBox="0 0 20 19"><path d="M10 0Q14.500 0 14.500 5Q14.500 8.500 12.300 11V12.500Q13 13.300 17 14.800Q19.300 15.700 19.300 18.500H.7Q.7 15.700 3 14.800Q7 13.300 7.700 12.500V11Q5.500 8.500 5.500 5Q5.500 0 10 0Z" fill="#ddd" /></svg>
      </div>
    </nav>
  );
}

export default function App() {
  return (
    <div className="h-[900px] w-[1600px] overflow-hidden bg-[repeating-linear-gradient(90deg,rgba(0,0,0,0.03)_0_1px,transparent_1px_3px),repeating-linear-gradient(0deg,rgba(0,0,0,0.03)_0_1px,transparent_1px_3px),radial-gradient(1100px_900px_at_800px_0,#7e7f84,#606166_55%,transparent),linear-gradient(#58595d,#3a3b3f_90%)] font-['Open_Sans','Noto_Sans',sans-serif]">
      <TopPanel />
      <div className="ml-[54px] flex h-[838px] w-[1493px] flex-col overflow-hidden rounded-t-[5px] border-r border-b border-[#6d6d6d] bg-white shadow-[0_12px_28px_6px_rgba(0,0,0,0.65)]">
        <TitleBar />
        <TabStrip />
        <Toolbar />
        <BookmarksBar />
        <div className="flex min-h-0 flex-1 font-['Liberation_Sans',Arial,sans-serif] [font-kerning:none]">
          <div className="w-[1484px] pt-[4px] pl-[163px]">
            <NavBar />
            <div className="flex pt-[4px]">
              <div className="relative h-[550px] w-[771px] shadow-[0_1px_4px_rgba(0,0,0,0.25)]">
                <CityMap />
                <div className="absolute top-[45px] left-[23px] h-[12px] w-[13px] bg-[#3b3b3b]" />
                <div className="absolute top-[10px] left-[10px] flex h-[40px] w-[40px] items-center justify-center rounded-full border-[5px] border-[#3b3b3b] bg-linear-to-b from-white to-[#dcdcdc] shadow-[0_2px_3px_rgba(0,0,0,0.2)]">
                  <svg className="h-[15px] w-[15px]" viewBox="0 0 15 15"><path d="M7.500 .5V14.500M.5 7.500H14.500" stroke="#666" strokeWidth="1.600" /></svg>
                </div>
                <div className="absolute top-[50px] left-[14px] flex h-[32px] w-[32px] items-center justify-center rounded-full border-[5px] border-[#3b3b3b] bg-linear-to-b from-white to-[#dcdcdc]">
                  <svg className="h-[2px] w-[10px]" viewBox="0 0 10 2"><path d="M0 1H10" stroke="#666" strokeWidth="1.600" /></svg>
                </div>
                <div className="absolute top-[10px] left-[722px] flex h-[40px] w-[40px] items-center justify-center rounded-full border-[5px] border-[#3b3b3b] bg-linear-to-b from-white to-[#dcdcdc] shadow-[0_2px_3px_rgba(0,0,0,0.2)]">
                  <svg className="h-[14px] w-[14px]" viewBox="0 0 14 14"><path d="M1 5V1H5M9 1H13V5M13 9V13H9M5 13H1V9" fill="none" stroke="#555" strokeWidth="2" /></svg>
                </div>
                <div className="absolute right-[11px] bottom-[4px] flex items-center gap-[4px]">
                  <div className="flex flex-col items-end gap-px pb-[2px] text-[9px] leading-[9px] whitespace-nowrap text-[#444]">
                    <span className="border-b border-[#777]">Работает на API 2ГИС</span>
                    <span className="border-b border-[#777]">Лицензионное соглашение</span>
                  </div>
                  <GisMark />
                </div>
              </div>
              <div className="ml-[6px]">
                <Calendar />
                <button className="h-[46px] w-[197px] rounded-[6px] border border-[#204d74] bg-[#286090] text-[18px] text-white shadow-[0_0_0_1px_#8bb0ec]">Launch demo modal</button>
              </div>
            </div>
            <div className="mt-[15px] flex h-[110px] w-[1157px]">
              <div className="flex-1 pt-[18px]">
                <div className="h-[110px] rounded-t-[4px] border border-r-0 border-[#ddd] text-[#333]">
                  <div className="h-[38px] border-b border-[#ddd] bg-[#f5f5f5] pl-[15.500px] text-[16px] leading-[37px]">Отсутствует пивной ларёК</div>
                  <p className="pt-[15px] pl-[15.500px] text-[14px] leading-5">Необходимо поставить пивной ларёк. А лучше два. Так как негде выпить и обсудить политические проблемы в стране.</p>
                </div>
              </div>
              <div className="w-[8px] bg-[#f4f4f4]" />
            </div>
          </div>
          <div className="w-[8px] bg-[#f4f4f4] pt-[2px] pl-[2px]">
            <div className="h-[576px] w-[4px] rounded-[2px] bg-[#919191]" />
          </div>
        </div>
      </div>
    </div>
  );
}
